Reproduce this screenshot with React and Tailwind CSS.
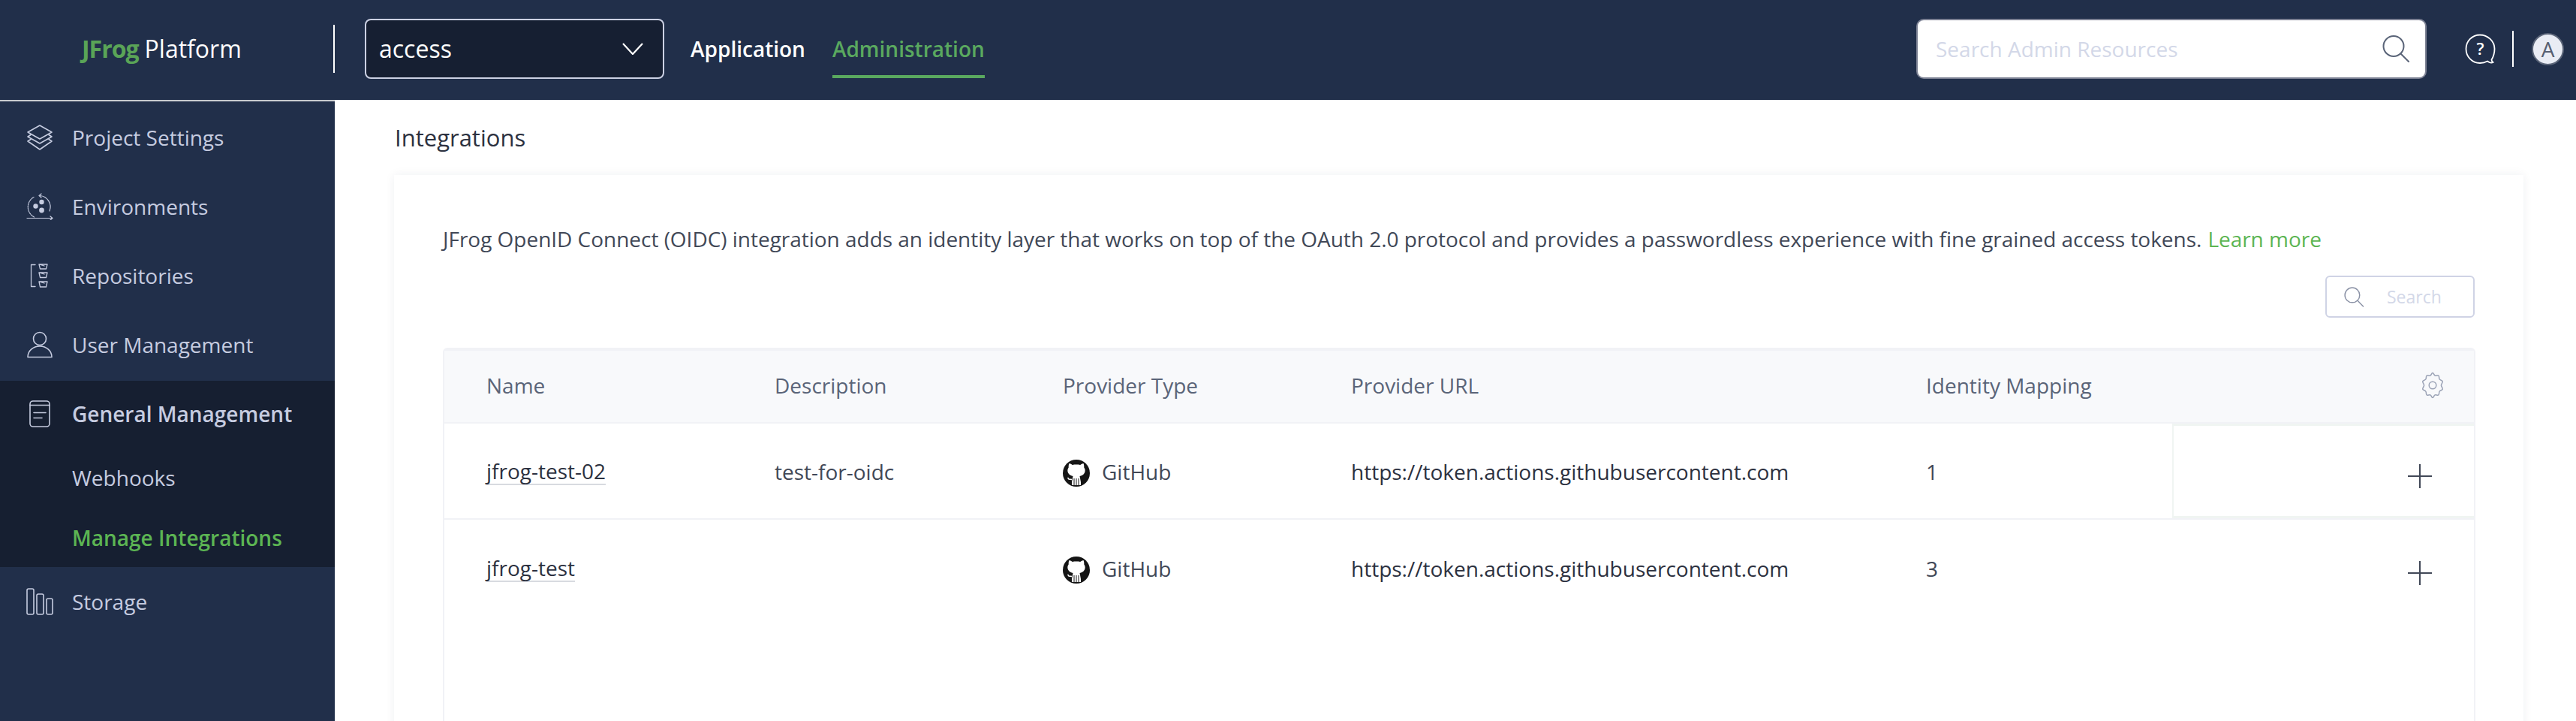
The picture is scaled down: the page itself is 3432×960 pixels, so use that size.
import React from "react";

const S = { fill: "none", stroke: "currentColor", strokeWidth: 1.6, strokeLinecap: "round", strokeLinejoin: "round" };

const Layers = () => (
  <svg width="36" height="36" viewBox="0 0 36 36" {...S}>
    <path d="M18 2 L34 11 L18 20 L2 11 Z" />
    <path d="M6 14.5 L2 17 L18 26 L34 17 L30 14.5" />
    <path d="M6 20.5 L2 23 L18 34 L34 23 L30 20.5" />
  </svg>
);
const Env = () => (
  <svg width="36" height="36" viewBox="0 0 36 36" fill="none" stroke="currentColor" strokeWidth="1.2" strokeLinecap="round" strokeLinejoin="round">
    <path d="M18 3.5 A15 15 0 0 1 31 24" />
    <path d="M20 1 L17 3.5 L20 6" />
    <path d="M10.5 32 A15 15 0 0 1 10 5.5" strokeDasharray="2 1.2" />
    <path d="M1 33.5 H35 M32 31 L35 33.5 L32 36" />
    <circle cx="12.5" cy="17.5" r="3.2" fill="currentColor" stroke="none" />
    <circle cx="20.5" cy="12" r="3.2" fill="currentColor" stroke="none" />
    <circle cx="20.5" cy="23" r="3.4" fill="currentColor" stroke="none" />
  </svg>
);
const Repo = () => (
  <svg width="36" height="36" viewBox="0 0 36 36" fill="none" stroke="currentColor" strokeWidth="1.3" strokeLinecap="round" strokeLinejoin="round">
    <path d="M12 3.5 H6.5 V32.5 H12" />
    <path d="M17 3 H28 L26.5 9 H18.5 Z M17 3 L24 5" />
    <path d="M17 14 H28 L26.5 20.5 H18.5 Z M17 14 L24 16" />
    <path d="M17 26 H28 L26.5 33 H18.5 Z M17 26 L24 28" />
  </svg>
);
const User = () => (
  <svg width="36" height="36" viewBox="0 0 36 36" {...S}>
    <circle cx="18" cy="10" r="8.5" />
    <path d="M2 34.5 C2 26 9 20 18 20 C27 20 34 26 34 34.5 Z" />
  </svg>
);
const Doc = () => (
  <svg width="36" height="36" viewBox="0 0 36 36" {...S}>
    <rect x="5" y="1" width="26" height="34" rx="4" />
    <path d="M5 6.5 H31 M10 16.5 H26 M10 23.5 H21" />
  </svg>
);
const Bars = () => (
  <svg width="36" height="36" viewBox="0 0 36 36" {...S}>
    <rect x="1" y="1" width="9" height="34" rx="2" />
    <rect x="14" y="8" width="9" height="27" rx="2" />
    <rect x="27" y="14" width="8" height="21" rx="2" />
  </svg>
);
const SearchIcon = ({ className }) => (
  <svg className={className} viewBox="0 0 37 36" fill="none" stroke="currentColor" strokeWidth="2" strokeLinecap="round">
    <circle cx="15" cy="14.5" r="13.5" />
    <path d="M25 25 L35 35" />
  </svg>
);
const Plus = () => (
  <svg width="32" height="32" viewBox="0 0 32 32" stroke="#414857" strokeWidth="2" fill="none">
    <path d="M16 0 V32 M0 16 H32" />
  </svg>
);
const Gear = () => (
  <svg width="36" height="36" viewBox="0 0 24 24" fill="none" stroke="#9aa2b5" strokeWidth="1" strokeLinecap="round" strokeLinejoin="round">
    <circle cx="12" cy="12" r="3.2" />
    <path d="M12 1c1 0 1 1.900 2.100 2.400 1 .4 2.300-.6 3.100 0 .9.6.2 2.200.9 3.200.6.9 2.400.9 2.700 1.900.3 1-1.200 2.400-1.200 3.500s1.500 2.500 1.200 3.500c-.3 1-2.100 1-2.700 1.900-.7 1 0 2.600-.9 3.200-.8.6-2.100-.4-3.100 0-1.100.5-1.100 2.400-2.100 2.400s-1-1.900-2.100-2.400c-1-.4-2.300.6-3.100 0-.9-.6-.2-2.200-.9-3.200-.6-.9-2.400-.9-2.700-1.900-.3-1 1.200-2.400 1.200-3.500s-1.500-2.500-1.200-3.500c.3-1 2.100-1 2.700-1.900.7-1 0-2.600.9-3.200.8-.6 2.100.4 3.100 0C11 2.900 11 1 12 1z" />
  </svg>
);
const Octo = () => (
  <svg className="mt-[3px]" width="36" height="36" viewBox="0 0 36 36">
    <circle cx="18" cy="18" r="18" fill="#151515" />
    <path d="M8.500 5 C11 5.500 12 6.800 13 7 C15.500 6.400 20.500 6.400 23 7 C24 6.800 25 5.500 27.500 5 C28.500 7.500 28.300 9 28.300 10.500 C30 12.500 30 15.500 29 17.500 C27.500 20.500 24.500 21.500 22.500 22 L24 30 L24 34 L12 34 L12 30 L13.500 22 C11.500 21.500 8.500 20.500 7 17.500 C6 15.500 6 12.500 7.700 10.500 C7.700 9 7.500 7.500 8.500 5 Z" fill="#fff" />
    <path d="M15 25 V35 M18 25 V35 M21 25 V35 M13 24 L10 27 L6 24.500" stroke="#151515" strokeWidth="1" fill="none" />
    <path d="M12 26.500 L8 26 L6.500 24" stroke="#fff" strokeWidth="1.400" fill="none" />
  </svg>
);
const Help = () => (
  <svg width="41" height="41" viewBox="0 0 41 41" fill="none" stroke="#fff" strokeWidth="1.800">
    <path d="M20 1.500 C9.500 1.500 1.500 9.800 1.500 20 C1.500 30.500 9.500 39 20 39 C24 39 27 38.200 30 36.500 C32 38 35 39.500 37.500 38 C36 37 35.500 35.500 35.500 34.500 C38 30.500 39.500 26 39.500 20 C39.500 9.800 30.500 1.500 20 1.500 Z" />
    <text x="20.500" y="28" fontSize="22" fontFamily="'Open Sans',sans-serif" fontWeight="600" fill="#fff" stroke="none" textAnchor="middle">?</text>
  </svg>
);

const NavItem = ({ icon, label }) => (
  <div className="flex h-[92px] items-center pl-[35px] text-[#c6cce0]">
    <span className="flex w-[36px] justify-center">{icon}</span>
    <span className="ml-[25px] text-[28px]">{label}</span>
  </div>
);

const Cell = ({ w, children, cls = "" }) => (
  <div className={`flex shrink-0 items-center ${w} ${cls}`}>{children}</div>
);

const Name = ({ children }) => (
  <span className="border-b-2 border-[#d8dae0] leading-[33px] text-[#2c3140]">{children}</span>
);

const Row = ({ name, desc, map, hover, last }) => (
  <div className={`flex h-[128px] text-[28px] text-[#414857] ${last ? "" : "border-b-2 border-[#f1f2f6]"}`}>
    <Cell w="w-[56px]" />
    <Cell w="w-[384px]" cls="pt-[2px]"><Name>{name}</Name></Cell>
    <Cell w="w-[384px]" cls="pt-[2px]">{desc}</Cell>
    <Cell w="w-[384px]" cls="pt-[2px]">
      <Octo />
      <span className="ml-[16px]">GitHub</span>
    </Cell>
    <Cell w="w-[766px]" cls="pt-[2px] text-[#2c3140]">https://token.actions.githubusercontent.com</Cell>
    <Cell w="w-[328px]" cls="pt-[2px]">{map}</Cell>
    <div className={`flex flex-1 items-center justify-end pr-[56px] pt-[14px] ${hover ? "border-y-[3px] border-l-[2px] border-[#f0f5f2] bg-white" : ""}`}>
      <Plus />
    </div>
  </div>
);

export default function App() {
  return (
    <div className="flex h-[960px] w-[3432px] flex-col overflow-hidden bg-white font-['Open_Sans',sans-serif]">
      <header className="flex h-[133px] shrink-0 items-center bg-[#212f4a] pb-[3px]">
        <div className="flex h-[64px] w-[446px] shrink-0 items-center border-r-2 border-white pl-[109px] text-[32px]">
          <span className="font-bold tracking-[-1px] text-[#5aa457]">JFrog</span>
          <span className="ml-[8px] text-white">Platform</span>
        </div>
        <div className="ml-[40px] flex h-[80px] w-[399px] items-center justify-between rounded-[8px] border-2 border-[#cbd0e3] bg-[#161f32] pl-[17px] pr-[26px] text-[32px] text-white">
          <span>access</span>
          <svg width="28" height="16" viewBox="0 0 28 16" fill="none" stroke="#fff" strokeWidth="2.200">
            <path d="M1 1 L14 15 L27 1" />
          </svg>
        </div>
        <div className="ml-[35px] flex h-[80px] items-center text-[28px] font-semibold text-white">Application</div>
        <div className="ml-[36px] flex h-[78px] flex-col justify-center border-b-4 border-[#5aa95f] pt-[4px] text-[28px] font-semibold text-[#5aa95f]">Administration</div>
        <div className="ml-auto flex h-[80px] w-[680px] items-center justify-between rounded-[10px] border-2 border-[#7d8294] bg-white pl-[24px] pr-[20px] text-[28px] text-[#d3d8e8]">
          <span>Search Admin Resources</span>
          <SearchIcon className="h-[36px] w-[37px] text-[#5a6478]" />
        </div>
        <div className="ml-[51px] flex"><Help /></div>
        <div className="ml-[22px] h-[48px] w-[2px] bg-white" />
        <div className="ml-[24px] mr-[16px] flex h-[43px] w-[43px] items-center justify-center rounded-full border-2 border-[#5a6478] bg-[#e9ecf4] text-[28px] text-[#565f72]">A</div>
      </header>
      <div className="flex min-h-0 flex-1">
        <aside className="w-[446px] shrink-0 border-t-2 border-[#c8cbcf] bg-[#212f4a] pt-[2px]">
          <NavItem icon={<Layers />} label="Project Settings" />
          <NavItem icon={<Env />} label="Environments" />
          <NavItem icon={<Repo />} label="Repositories" />
          <NavItem icon={<User />} label="User Management" />
          <div className="mt-[2px] h-[248px] bg-[#161f31] text-[#c6cce0]">
            <div className="flex h-[88px] items-center pl-[35px]">
              <span className="flex w-[36px] justify-center"><Doc /></span>
              <span className="ml-[25px] text-[28px] font-semibold">General Management</span>
            </div>
            <div className="flex h-[82px] items-center pl-[96px] text-[28px]">Webhooks</div>
            <div className="flex h-[78px] items-center pl-[96px] text-[28px] font-semibold text-[#5cb553]">Manage Integrations</div>
          </div>
          <NavItem icon={<Bars />} label="Storage" />
        </aside>
        <main className="min-w-0 flex-1 pl-[79px] pr-[70px]">
          <h1 className="flex h-[100px] items-center pl-[1px] text-[31px] font-normal text-[#2c3140]">Integrations</h1>
          <section className="h-[800px] bg-white pl-[65px] pr-[64px] shadow-[0_0_12px_rgba(30,40,70,0.07)]">
            <div className="flex h-[134px] items-center justify-start pt-[36px] text-[28px] tracking-[-0.025px] text-[#414857]">
              JFrog OpenID Connect (OIDC) integration adds an identity layer that works on top of the OAuth 2.0 protocol and provides a passwordless experience with fine grained access tokens.
              <span className="ml-[8px] text-[#5cb553]">Learn more</span>
            </div>
            <div className="flex h-[96px] justify-end pr-[1px]">
              <div className="flex h-[56px] w-[199px] items-center rounded-[6px] border-2 border-[#cfd3e5] pl-[23px] text-[23px] text-[#d3d8e8]">
                <SearchIcon className="h-[27px] w-[27px] text-[#8b92a6]" />
                <span className="ml-[30px]">Search</span>
              </div>
            </div>
            <div className="rounded-t-[6px] border-x-2 border-t-4 border-[#f1f2f6]">
              <div className="flex h-[97px] border-b-2 border-[#f1f2f6] bg-[#f8f9fb] pb-[3px] text-[28px] text-[#5a6478]">
                <Cell w="w-[56px]" />
                <Cell w="w-[384px]">Name</Cell>
                <Cell w="w-[384px]">Description</Cell>
                <Cell w="w-[384px]">Provider Type</Cell>
                <Cell w="w-[766px]">Provider URL</Cell>
                <Cell w="w-[600px]">Identity Mapping</Cell>
                <div className="flex flex-1 items-center justify-end pr-[37px]"><Gear /></div>
              </div>
              <Row name="jfrog-test-02" desc="test-for-oidc" map="1" hover />
              <Row name="jfrog-test" desc="" map="3" last />
              <div className="h-[300px]" />
            </div>
          </section>
        </main>
      </div>
    </div>
  );
}
